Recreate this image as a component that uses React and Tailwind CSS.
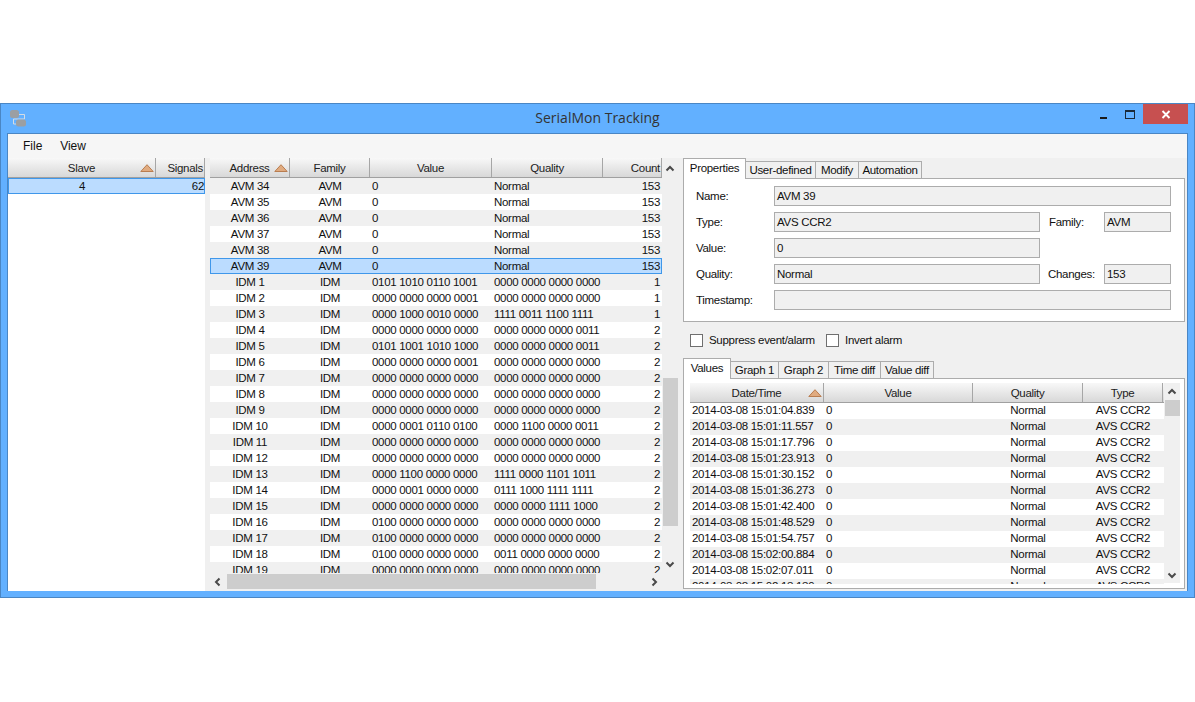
import React from 'react';

const idmRows = [
  ['IDM 1', '0101 1010 0110 1001', '0000 0000 0000 0000', 1],
  ['IDM 2', '0000 0000 0000 0001', '0000 0000 0000 0000', 1],
  ['IDM 3', '0000 1000 0010 0000', '1111 0011 1100 1111', 1],
  ['IDM 4', '0000 0000 0000 0000', '0000 0000 0000 0011', 2],
  ['IDM 5', '0101 1001 1010 1000', '0000 0000 0000 0011', 2],
  ['IDM 6', '0000 0000 0000 0001', '0000 0000 0000 0000', 2],
  ['IDM 7', '0000 0000 0000 0000', '0000 0000 0000 0000', 2],
  ['IDM 8', '0000 0000 0000 0000', '0000 0000 0000 0000', 2],
  ['IDM 9', '0000 0000 0000 0000', '0000 0000 0000 0000', 2],
  ['IDM 10', '0000 0001 0110 0100', '0000 1100 0000 0011', 2],
  ['IDM 11', '0000 0000 0000 0000', '0000 0000 0000 0000', 2],
  ['IDM 12', '0000 0000 0000 0000', '0000 0000 0000 0000', 2],
  ['IDM 13', '0000 1100 0000 0000', '1111 0000 1101 1011', 2],
  ['IDM 14', '0000 0001 0000 0000', '0111 1000 1111 1111', 2],
  ['IDM 15', '0000 0000 0000 0000', '0000 0000 1111 1000', 2],
  ['IDM 16', '0100 0000 0000 0000', '0000 0000 0000 0000', 2],
  ['IDM 17', '0100 0000 0000 0000', '0000 0000 0000 0000', 2],
  ['IDM 18', '0100 0000 0000 0000', '0011 0000 0000 0000', 2],
  ['IDM 19', '0000 0000 0000 0000', '0000 0000 0000 0000', 2],
];

const times = [
  '15:01:04.839', '15:01:11.557', '15:01:17.796', '15:01:23.913', '15:01:30.152', '15:01:36.273',
  '15:01:42.400', '15:01:48.529', '15:01:54.757', '15:02:00.884', '15:02:07.011', '15:02:13.139',
];

function SortArrow() {
  return (
    <svg className="absolute right-[1px] top-[6px]" width="14" height="8" viewBox="0 0 14 8">
      <path d="M7 0.7 L13.2 7.5 L0.8 7.5 Z" fill="#e0ab80" stroke="#b97d50" strokeWidth="1" />
    </svg>
  );
}

function HeaderCell({ width, label, sorted, right }) {
  return (
    <div className={`relative h-full ${width} shrink-0 border-r border-r-[#a6a6a6] leading-[20px] text-[#222] ${right ? 'pr-[1px] text-right' : 'text-center'}`}>
      {label}
      {sorted && <SortArrow />}
    </div>
  );
}

function Header({ children }) {
  return (
    <div className="flex h-5 shrink-0 border-b border-b-[#a0a0a0] bg-linear-to-b from-[#f8f8f8] to-[#d8d8d8]">{children}</div>
  );
}

function Chevron({ dir }) {
  const d = {
    up: 'M1.5 6.5 L5 3 L8.5 6.5',
    down: 'M1.5 3.5 L5 7 L8.5 3.5',
    left: 'M6.5 1.5 L3 5 L6.5 8.5',
    right: 'M3.5 1.5 L7 5 L3.5 8.5',
  }[dir];
  return (
    <svg width="10" height="10" viewBox="0 0 10 10">
      <path d={d} fill="none" stroke="#4a4a4a" strokeWidth="2" />
    </svg>
  );
}

function SignalRow({ row, index, selected }) {
  const bg = selected
    ? 'bg-[#bbdcff] ring-1 ring-inset ring-[#3f97ea]'
    : index % 2 === 0
      ? 'bg-[#f0f0f0]'
      : 'bg-white';
  return (
    <div className={`flex h-4 shrink-0 leading-[16px] ${bg}`}>
      <div className="w-[80px] shrink-0 text-center">{row[0]}</div>
      <div className="w-[80px] shrink-0 text-center">{row[1]}</div>
      <div className="w-[122px] shrink-0 pl-[2px]">{row[2]}</div>
      <div className="w-[111px] shrink-0 pl-[2px]">{row[3]}</div>
      <div className="w-[58px] shrink-0 pr-[1px] text-right">{row[4]}</div>
    </div>
  );
}

function Field({ width, children }) {
  return (
    <div className={`h-5 ${width} shrink-0 border border-[#acacac] bg-[#f0f0f0] pl-[2px] leading-[19px]`}>{children}</div>
  );
}

function Label({ className = 'w-[78px]', children }) {
  return <div className={`${className} pt-[2px]`}>{children}</div>;
}

function Tab({ label, width, active }) {
  if (active) {
    return (
      <div className={`relative z-10 h-[21px] ${width} border border-b-0 border-[#acacac] bg-white text-center leading-[18px]`}>
        {label}
      </div>
    );
  }
  return (
    <div className={`mt-[3px] -ml-px h-[18px] ${width} border border-[#acacac] bg-[#f0f0f0] text-center leading-[17px]`}>
      {label}
    </div>
  );
}

function Checkbox({ label, width }) {
  return (
    <div className={`flex items-center ${width}`}>
      <div className="mr-[6px] size-[13px] border border-[#6f6f6f] bg-white" />
      <span className="pt-[2px]">{label}</span>
    </div>
  );
}

export default function App() {
  const signals = [];
  for (let i = 34; i <= 39; i++) signals.push([`AVM ${i}`, 'AVM', '0', 'Normal', 153]);
  idmRows.forEach((r) => signals.push([r[0], 'IDM', r[1], r[2], r[3]]));

  return (
    <div className="h-[702px] bg-white pt-[103px] font-['Liberation_Sans',sans-serif] text-[11.5px] tracking-[-0.3px] text-[#111]">
      <div className="flex h-[495px] flex-col border border-[#4a86c4] bg-[#62b0ff] px-[6px] pb-[6px]">
        {/* title bar */}
        <div className="-mx-[6px] flex h-[29px] shrink-0">
          <div className="w-[100px] pt-[6px] pl-[9px]">
            <svg width="18" height="18" viewBox="0 0 18 18">
              <path d="M8 4.5 H14.5 V9 H3.5 V14 H7" fill="none" stroke="#d4dce4" strokeWidth="1" />
              <rect x="0" y="0" width="9" height="8" rx="2.5" fill="#9b9fa3" />
              <rect x="6" y="9.5" width="10" height="7" rx="2.5" fill="#9b9fa3" />
            </svg>
          </div>
          <div className="flex-1 pt-[3px] text-center font-['Open_Sans',sans-serif] text-[14px] tracking-normal text-[#333]">
            SerialMon Tracking
          </div>
          <div className="flex w-[100px] justify-end pr-[6px]">
            <div className="mt-[13px] mr-[18px] h-[2px] w-[7px] bg-[#1a1a1a]" />
            <div className="mt-[6px] mr-[8px] h-[9px] w-[10px] border border-t-2 border-[#1a2a3a]" />
            <div className="flex h-5 w-[45px] items-center justify-center bg-[#c75050]">
              <svg width="10" height="9" viewBox="0 0 10 9">
                <path d="M1.5 1 L8.5 8 M8.5 1 L1.5 8" stroke="#fff" strokeWidth="1.9" />
              </svg>
            </div>
          </div>
        </div>

        {/* client area */}
        <div className="flex min-h-0 flex-1 flex-col border border-b-0 border-[#4a86c4] bg-[#f0f0f0]">
          <div className="flex h-6 shrink-0 items-center bg-[#f6f6f6] text-[12px] tracking-normal">
            <div className="ml-[15px]">File</div>
            <div className="ml-[18px] tracking-[-0.1px]">View</div>
          </div>

          <div className="flex flex-1">
            {/* slaves */}
            <div className="w-[197px] shrink-0 bg-white">
              <Header>
                <HeaderCell width="w-[148px]" label="Slave" sorted />
                <HeaderCell width="w-[49px]" label="Signals" right />
              </Header>
              <div className="flex h-4 bg-[#bbdcff] leading-[16px] ring-1 ring-[#3f97ea] ring-inset">
                <div className="w-[148px] text-center">4</div>
                <div className="w-[48px] text-right">62</div>
              </div>
            </div>

            {/* signals */}
            <div className="ml-[5px] w-[468px] shrink-0">
              <div className="flex h-[415px]">
                <div className="flex w-[452px] flex-col overflow-hidden bg-white">
                  <Header>
                    <HeaderCell width="w-[80px]" label="Address" sorted />
                    <HeaderCell width="w-[80px]" label="Family" />
                    <HeaderCell width="w-[122px]" label="Value" />
                    <HeaderCell width="w-[111px]" label="Quality" />
                    <HeaderCell width="w-[59px]" label="Count" right />
                  </Header>
                  {signals.map((row, i) => (
                    <SignalRow key={row[0]} row={row} index={i} selected={row[0] === 'AVM 39'} />
                  ))}
                </div>
                <div className="flex w-4 flex-col items-center pt-[6px]">
                  <Chevron dir="up" />
                  <div className="mt-[204px] h-[148px] w-[15px] bg-[#cdcdcd]" />
                  <div className="mt-auto mb-[4px]">
                    <Chevron dir="down" />
                  </div>
                </div>
              </div>
              <div className="mt-px flex h-[15px] w-[452px] items-center bg-[#f0f0f0]">
                <div className="ml-[3px]"><Chevron dir="left" /></div>
                <div className="ml-[4px] h-[15px] w-[369px] bg-[#cdcdcd]" />
                <div className="mr-[3px] ml-auto"><Chevron dir="right" /></div>
              </div>
            </div>

            {/* details */}
            <div className="ml-[5px] flex w-[502px] shrink-0 flex-col">
              <div className="flex h-5 shrink-0">
                <Tab label="Properties" width="w-[63px]" active />
                <Tab label="User-defined" width="w-[71px]" />
                <Tab label="Modify" width="w-[44px]" />
                <Tab label="Automation" width="w-[64px]" />
              </div>
              <div className="flex h-[144px] shrink-0 flex-col gap-[6px] border border-[#acacac] bg-white pt-[7px] pl-[12px]">
                <div className="flex items-center">
                  <Label>Name:</Label>
                  <Field width="w-[397px]">AVM 39</Field>
                </div>
                <div className="flex items-center">
                  <Label>Type:</Label>
                  <Field width="w-[266px]">AVS CCR2</Field>
                  <Label className="ml-[9px] w-[55px]">Family:</Label>
                  <Field width="w-[67px]">AVM</Field>
                </div>
                <div className="flex items-center">
                  <Label>Value:</Label>
                  <Field width="w-[266px]">0</Field>
                </div>
                <div className="flex items-center">
                  <Label>Quality:</Label>
                  <Field width="w-[266px]">Normal</Field>
                  <Label className="ml-[8px] w-[56px]">Changes:</Label>
                  <Field width="w-[67px]">153</Field>
                </div>
                <div className="flex items-center">
                  <Label>Timestamp:</Label>
                  <Field width="w-[397px]"></Field>
                </div>
              </div>

              <div className="mt-[11px] flex h-[14px] shrink-0 pl-[7px]">
                <Checkbox label="Suppress event/alarm" width="w-[136px]" />
                <Checkbox label="Invert alarm" />
              </div>

              <div className="mt-[11px] flex h-5 shrink-0">
                <Tab label="Values" width="w-[48px]" active />
                <Tab label="Graph 1" width="w-[49px]" />
                <Tab label="Graph 2" width="w-[51px]" />
                <Tab label="Time diff" width="w-[53px]" />
                <Tab label="Value diff" width="w-[54px]" />
              </div>
              <div className="flex h-[211px] shrink-0 border border-[#acacac] bg-white pt-[4px] pl-[6px]">
                <div className="flex h-[201px] w-[474px] flex-col overflow-hidden">
                  <Header>
                    <HeaderCell width="w-[134px]" label="Date/Time" sorted />
                    <HeaderCell width="w-[149px]" label="Value" />
                    <HeaderCell width="w-[110px]" label="Quality" />
                    <HeaderCell width="w-[80px]" label="Type" />
                  </Header>
                  {times.map((t, i) => (
                    <div key={t} className={`flex h-4 shrink-0 leading-[15px] ${i % 2 ? 'bg-[#f0f0f0]' : 'bg-white'}`}>
                      <div className="w-[134px] shrink-0 pl-[2px]">2014-03-08 {t}</div>
                      <div className="w-[149px] shrink-0 pl-[2px]">0</div>
                      <div className="w-[110px] shrink-0 text-center">Normal</div>
                      <div className="w-[80px] shrink-0 text-center">AVS CCR2</div>
                    </div>
                  ))}
                </div>
                <div className="flex h-[200px] w-4 flex-col items-center bg-[#f0f0f0] pt-[4px]">
                  <Chevron dir="up" />
                  <div className="mt-[3px] h-4 w-[15px] bg-[#cdcdcd]" />
                  <div className="mt-auto mb-[3px]">
                    <Chevron dir="down" />
                  </div>
                </div>
              </div>
            </div>
          </div>
        </div>
      </div>
    </div>
  );
}
